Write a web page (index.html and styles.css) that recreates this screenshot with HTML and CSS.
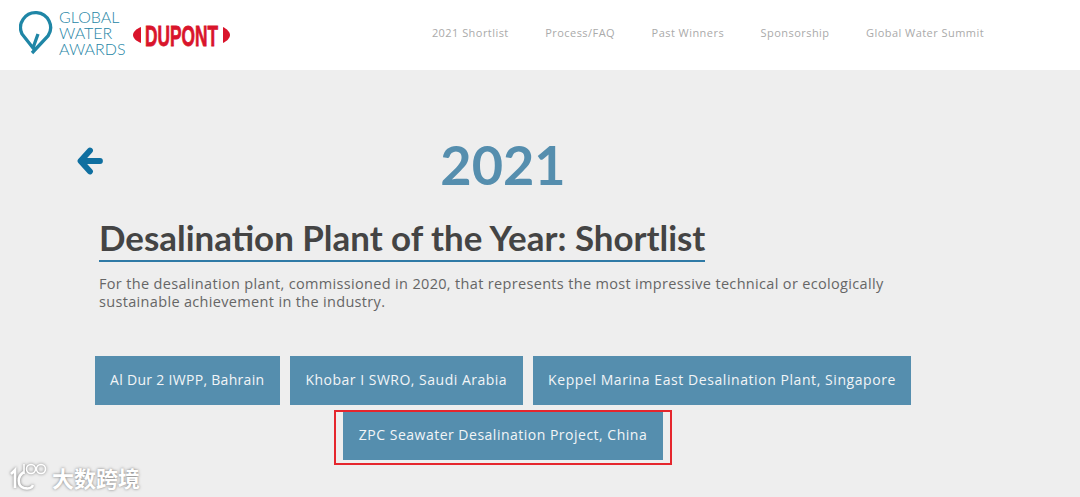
FILE: index.html
```html
<!DOCTYPE html>
<html lang="en">
<head>
    <meta charset="UTF-8">
    <meta name="viewport" content="width=device-width, initial-scale=1.0">
    <title>Global Water Awards</title>
    <link rel="stylesheet" href="styles.css">
</head>
<body>
    <header class="header">
        <div class="brand">
            <svg class="pin" width="34" height="46" viewBox="0 0 34 46" fill="none">
                <path d="M13 43 L29 26 A15 15 0 1 0 3 24 L14 38 L19 24" stroke="#1f86a6" stroke-width="3.3"/>
            </svg>
            <div class="brand-name">GLOBAL<br>WATER<br>AWARDS</div>
            <svg class="dupont" width="98" height="32" viewBox="0 0 98 32">
                <path d="M9 8 L9 24 C4 22 1 19 1 16 C1 13 4 10 9 8 Z" fill="#d9142b"/>
                <path d="M91 8 L91 24 C95 22 98 19 98 16 C98 13 95 10 91 8 Z" fill="#d9142b"/>
                <text class="dupont-text" x="13" y="27" textLength="73" lengthAdjust="spacingAndGlyphs">DUPONT</text>
            </svg>
        </div>
        <nav class="nav">
            <a href="#">2021 Shortlist</a>
            <a href="#">Process/FAQ</a>
            <a href="#">Past Winners</a>
            <a href="#">Sponsorship</a>
            <a href="#">Global Water Summit</a>
        </nav>
    </header>

    <main class="main">
        <div class="year-row">
            <svg class="back" width="28" height="28" viewBox="0 0 28 28" fill="none">
                <path d="M13 3.5 L3.5 14 L13 24.5 M4.5 14 L23 14" stroke="#0f6fa0" stroke-width="5.8" stroke-linecap="round" stroke-linejoin="round"/>
            </svg>
            <div class="year">2021</div>
        </div>
        <div class="intro">
            <h1>Desalination Plant of the Year: Shortlist</h1>
            <p>For the desalination plant, commissioned in 2020, that represents the most impressive technical or ecologically sustainable achievement in the industry.</p>
        </div>
        <div class="buttons">
            <a class="btn tight" href="#">Al Dur 2 IWPP, Bahrain</a>
            <a class="btn" href="#">Khobar I SWRO, Saudi Arabia</a>
            <a class="btn wide" href="#">Keppel Marina East Desalination Plant, Singapore</a>
            <a class="btn marked" href="#">ZPC Seawater Desalination Project, China</a>
        </div>
    </main>

    <div class="watermark">
        <svg width="44" height="30" viewBox="0 0 44 30" fill="none" stroke="#fff" stroke-width="2.6">
            <path d="M3 12 L7 8 L7 26"/>
            <path d="M16 10 C9 14 9 24 16 26 C20 27 24 26 25 23"/>
            <path d="M16 2 L16 12" stroke-width="1.6"/>
            <circle cx="23" cy="7" r="4.5" stroke-width="1.6"/>
            <circle cx="33" cy="7" r="4.5" stroke-width="1.6"/>
        </svg>
        <span>大数跨境</span>
    </div>
</body>
</html>
```

FILE: styles.css
```css
body {
    margin: 0;
    padding: 0;
    background-color: #eeeeee;
    font-family: "Open Sans", "Noto Sans", sans-serif;
    height: 497px;
    overflow: hidden;
    position: relative;
}
.header {
    display: flex;
    align-items: center;
    justify-content: space-between;
    height: 70px;
    background-color: #fff;
    padding: 0 96px 0 19px;
}
.brand {
    display: flex;
    align-items: center;
}
.pin {
    margin-right: 6px;
    margin-bottom: 4px;
}
.brand-name {
    font-family: Lato, sans-serif;
    font-weight: 300;
    font-size: 16px;
    line-height: 16px;
    color: #1f86a6;
    width: 73px;
    margin-bottom: 4px;
}
.dupont {
    overflow: visible;
}
.dupont-text {
    font-family: "Liberation Sans", sans-serif;
    font-weight: bold;
    font-size: 30px;
    fill: #d9142b;
    stroke: #d9142b;
    stroke-width: 0.8;
}
.nav {
    display: flex;
    gap: 36.5px;
    margin-bottom: 6px;
}
.nav a {
    font-size: 11px;
    letter-spacing: 0.45px;
    color: #aaaaaa;
    text-decoration: none;
}
.year-row {
    display: flex;
    align-items: center;
    justify-content: center;
    position: relative;
    height: 60px;
    margin: 64px 0 0 -74px;
}
.back {
    position: absolute;
    left: 151px;
    top: 13px;
}
.year {
    font-family: Lato, sans-serif;
    font-weight: bold;
    font-size: 54px;
    color: #558eae;
}
.intro {
    padding: 0 190px 0 99px;
    margin-top: 22px;
}
h1 {
    display: inline-block;
    margin: 0;
    font-family: Lato, sans-serif;
    font-weight: bold;
    font-size: 34.9px;
    line-height: 44px;
    color: #444444;
    border-bottom: 2px solid #2f7aa6;
}
.intro p {
    margin: 13px 0 0;
    font-size: 14.5px;
    line-height: 18px;
    letter-spacing: 0.33px;
    color: #666666;
}
.buttons {
    display: flex;
    flex-wrap: wrap;
    justify-content: center;
    gap: 6px 10px;
    width: 830px;
    margin: 45px 0 0 88px;
}
.btn {
    display: block;
    height: 49px;
    line-height: 48px;
    padding: 0 15.5px;
    background-color: #558eae;
    color: #f2f5f7;
    font-size: 14px;
    letter-spacing: 0.5px;
    text-decoration: none;
    position: relative;
}
.tight {
    letter-spacing: 0.3px;
}
.wide {
    letter-spacing: 0.57px;
}
.marked::after {
    content: "";
    position: absolute;
    left: -9px;
    right: -9px;
    top: -1px;
    bottom: -5px;
    border: 2px solid #e5262d;
}
.watermark {
    position: absolute;
    left: 8px;
    top: 460px;
    display: flex;
    align-items: center;
    color: #fff;
    font-family: "Noto Sans CJK SC", sans-serif;
    font-weight: bold;
    font-size: 22px;
    line-height: 34px;
    text-shadow: 0 0 3px #777;
}
.watermark svg {
    filter: drop-shadow(0 0 1.5px #777);
}
```
